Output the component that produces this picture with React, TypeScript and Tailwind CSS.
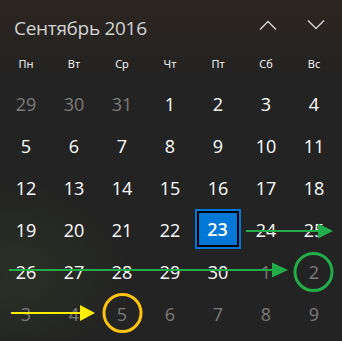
const WEEKDAYS = ["Пн", "Вт", "Ср", "Чт", "Пт", "Сб", "Вс"];

type Day = { n: number; muted?: boolean; selected?: boolean };

const days: Day[] = [
  { n: 29, muted: true },
  { n: 30, muted: true },
  { n: 31, muted: true },
  ...Array.from({ length: 30 }, (_, i) => ({ n: i + 1, selected: i + 1 === 23 })),
  ...Array.from({ length: 9 }, (_, i) => ({ n: i + 1, muted: true })),
];

function Chevron({ up }: { up?: boolean }) {
  return (
    <svg width="18" height="10" viewBox="0 0 18 10" fill="none" stroke="#d6d6d6" strokeWidth="1.4">
      {up ? <path d="M1 9.5 L9 1.5 L17 9.5" /> : <path d="M1 0.5 L9 8.5 L17 0.5" />}
    </svg>
  );
}

function Annotations() {
  return (
    <svg className="absolute inset-0 pointer-events-none" width="342" height="341" viewBox="0 0 342 341">
      {/* row 19 arrow */}
      <line x1="246" y1="231" x2="320" y2="231" stroke="#22ac4a" strokeWidth="2" />
      <polygon points="318,223.5 333,231 318,238.5" fill="#22ac4a" />
      {/* row 26 arrow */}
      <line x1="9" y1="270" x2="274" y2="270" stroke="#22ac4a" strokeWidth="2" />
      <polygon points="272,262.5 288,270 272,277.5" fill="#22ac4a" />
      <circle cx="313.5" cy="272" r="18.5" stroke="#22ac4a" strokeWidth="3" fill="none" />
      {/* next month arrow */}
      <line x1="11" y1="313" x2="82" y2="313" stroke="#ffee00" strokeWidth="2" />
      <polygon points="80,305 95,313 80,321" fill="#ffee00" />
      <circle cx="122.5" cy="313" r="18.5" stroke="#ffc20e" strokeWidth="3" fill="none" />
    </svg>
  );
}

export default function App() {
  return (
    <div
      className="relative w-[342px] h-[341px] overflow-hidden bg-[#232323] text-white"
      style={{ fontFamily: '"Open Sans", "Noto Sans", sans-serif' }}
    >
      <div className="absolute inset-0 bg-[linear-gradient(180deg,#2b2521_0px,#282421_40px,#232323_75px)]" />
      <div className="absolute inset-0 bg-[radial-gradient(ellipse_110px_90px_at_5%_80%,rgba(70,95,45,0.22),transparent)]" />

      <div className="relative px-[2px]">
        <div className="flex items-center h-[48px]">
          <span className="pl-[12px] pt-[8px] flex-1 text-[19px] text-[#d4d4d4] tracking-[-0.3px]">Сентябрь 2016</span>
          <div className="grid grid-cols-2 w-[96px]">
            <div className="flex justify-center pt-[1px]">
              <Chevron up />
            </div>
            <div className="flex justify-center pt-[1px]">
              <Chevron />
            </div>
          </div>
        </div>

        <div className="grid grid-cols-[repeat(7,48px)] h-[32px] items-center">
          {WEEKDAYS.map((d) => (
            <div key={d} className="text-center text-[11px] text-white">
              {d}
            </div>
          ))}
        </div>

        <div className="grid grid-cols-[repeat(7,48px)] auto-rows-[42px] mt-[3px]">
          {days.map((d, i) =>
            d.selected ? (
              <div key={i} className="flex items-center justify-center">
                <div className="w-[46px] h-[40px] border-2 border-[#0078d7] bg-black p-[2px] ml-[-1px] mt-[-2px]">
                  <div className="w-full h-full bg-[#0078d7] flex items-center justify-center text-[18px] font-semibold">
                    {d.n}
                  </div>
                </div>
              </div>
            ) : (
              <div
                key={i}
                className={`flex items-center justify-center text-[18px] ${d.muted ? "text-[#7b7b7b]" : "text-white"}`}
              >
                {d.n}
              </div>
            ),
          )}
        </div>
      </div>

      <Annotations />
    </div>
  );
}
